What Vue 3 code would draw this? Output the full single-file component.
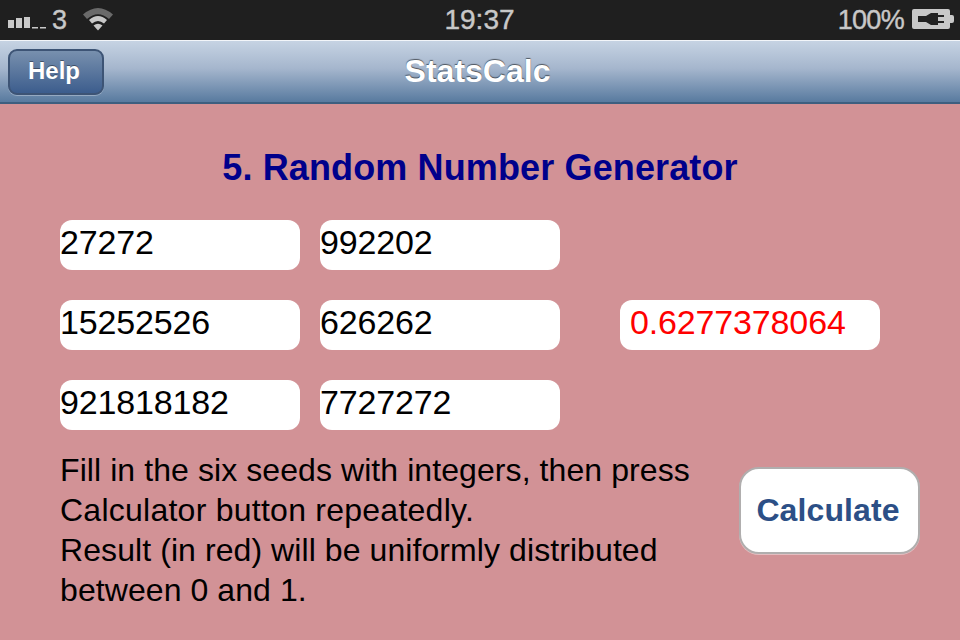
<script setup>
const seeds = [
  ['27272', '992202', ''],
  ['15252526', '626262', '0.6277378064'],
  ['921818182', '7727272', ''],
]
const bars = [
  { x: 8, y: 20, h: 8 },
  { x: 16, y: 18, h: 10 },
  { x: 24, y: 17, h: 11 },
  { x: 32, y: 27, h: 1.5 },
  { x: 40, y: 27, h: 1.5 },
]
</script>

<template>
  <div class="phone">
    <header class="status">
      <div class="status-left">
        <svg class="signal" width="48" height="40" viewBox="0 0 48 40">
          <rect v-for="b in bars" :key="b.x" :x="b.x" :y="b.y" width="6" :height="b.h" fill="#c8c8c8" />
        </svg>
        <span class="carrier">3</span>
        <svg class="wifi" width="32" height="40" viewBox="0 0 32 40">
          <path d="M1 14.5 Q16 1.5 31 14.5 L27 19 Q16 9.5 5 19 Z" fill="#6a6a6a" />
          <path d="M7 20 Q16 12 25 20 L22 23.5 Q16 18.5 10 23.5 Z" fill="#c8c8c8" />
          <path d="M16 30.5 L11.5 25.5 Q16 22 20.5 25.5 Z" fill="#c8c8c8" />
        </svg>
      </div>
      <div class="clock">19:37</div>
      <div class="status-right">
        <span class="pct">100%</span>
        <svg width="44" height="40" viewBox="0 0 44 40">
          <rect x="1" y="9" width="38" height="20" rx="2" fill="#c8c8c8" />
          <path d="M39 15 h2 a2 2 0 0 1 2 2 v4 a2 2 0 0 1 -2 2 h-2 Z" fill="#c8c8c8" />
          <path d="M7 16 h8 l5 -3 h7 v12 h-7 l-5 -3 h-8 Z" fill="#222" />
          <path d="M27 15 h6 v2 h-6 Z M27 21 h6 v2 h-6 Z" fill="#222" />
        </svg>
      </div>
    </header>

    <nav class="navbar">
      <div class="nav-side"><button class="help">Help</button></div>
      <div class="nav-title">StatsCalc</div>
      <div class="nav-side"></div>
    </nav>

    <main class="content">
      <h1 class="title">5. Random Number Generator</h1>

      <div class="grid">
        <template v-for="(row, i) in seeds" :key="i">
          <div class="field">{{ row[0] }}</div>
          <div class="field">{{ row[1] }}</div>
          <div v-if="row[2]" class="field result">{{ row[2] }}</div>
          <div v-else></div>
        </template>
      </div>

      <div class="bottom">
        <p class="help-text">
          Fill in the six seeds with integers, then press<br />
          <span class="wide">Calculator button repeatedly.</span><br />
          Result (in red) will be uniformly distributed<br />
          between 0 and 1.
        </p>
        <button class="calc">Calculate</button>
      </div>
    </main>
  </div>
</template>

<style>
html, body { margin: 0; background: #d29296; }
</style>

<style scoped>
.phone {
  width: 960px;
  height: 640px;
  overflow: hidden;
  display: flex;
  flex-direction: column;
  font-family: "Liberation Sans", Arial, sans-serif;
  background: #d29296;
}
.status {
  height: 40px;
  flex: none;
  background: #1f1f1f;
  color: #c8c8c8;
  display: grid;
  grid-template-columns: 1fr auto 1fr;
  align-items: center;
  font-size: 27px;
  -webkit-text-stroke: 0.4px #c8c8c8;
}
.status-left { display: flex; align-items: center; }
.signal { flex: none; }
.carrier { margin-left: 4px; }
.wifi { margin-left: 15px; flex: none; }
.status-right { display: flex; justify-content: flex-end; align-items: center; }
.status-right svg { margin: 0 5px 0 7px; flex: none; }
.clock { text-align: center; font-size: 28px; margin-left: -1px; }
.pct { letter-spacing: -0.7px; }
.navbar {
  height: 64px;
  flex: none;
  box-sizing: border-box;
  border-top: 1px solid #f2f5f9;
  border-bottom: 2px solid #3d5e7f;
  background: linear-gradient(#c6d3e3, #a5b6cd 45%, #587a9f);
  display: grid;
  grid-template-columns: 1fr auto 1fr;
  align-items: center;
}
.nav-side { display: flex; }
.help {
  width: 96px;
  height: 46px;
  margin: 0 0 0 8px;
  padding: 0 4px 2px 0;
  box-sizing: border-box;
  border: 2px solid #3d5475;
  border-radius: 9px;
  background: linear-gradient(#7890ae, #3c5d8d);
  box-shadow: 0 1px 0 rgba(255, 255, 255, 0.3);
  color: #fff;
  font: bold 24px "Liberation Sans", Arial, sans-serif;
  text-shadow: 0 -1px 0 rgba(0, 0, 0, 0.4);
}
.nav-title {
  margin: -1px 5px 0 0;
  color: #fff;
  font-size: 32px;
  font-weight: bold;
  text-shadow: 0 -1px 1px rgba(0, 0, 0, 0.55);
}
.content {
  flex: 1;
  padding: 0 40px 0 60px;
  color: #000;
}
.title {
  margin: 44px 0 0 -60px;
  width: 960px;
  text-align: center;
  color: #00008b;
  font-size: 36px;
  line-height: 40px;
  font-weight: bold;
  letter-spacing: 0.13px;
}
.grid {
  margin-top: 32px;
  display: grid;
  grid-template-columns: 240px 240px 240px;
  grid-auto-rows: 50px;
  column-gap: 20px;
  row-gap: 30px;
}
.field {
  background: #fff;
  border-radius: 12px;
  font-size: 34px;
  line-height: 44px;
  letter-spacing: -0.15px;
  overflow: hidden;
  white-space: nowrap;
}
.result {
  margin-left: 40px;
  width: 260px;
  padding-left: 10px;
  box-sizing: border-box;
  color: #ff0000;
}
.bottom {
  display: flex;
  justify-content: space-between;
  align-items: flex-start;
  margin-top: 20px;
}
.help-text {
  margin: 0;
  font-size: 32px;
  line-height: 40px;
  letter-spacing: 0.08px;
  white-space: nowrap;
}
.wide { letter-spacing: 0.25px; }
.calc {
  margin-top: 17px;
  width: 181px;
  height: 87px;
  padding: 0 3px 0 0;
  box-sizing: border-box;
  border: 2px solid #b0aeae;
  border-radius: 20px;
  background: #fff;
  box-shadow: 0 1px 0 rgba(255, 255, 255, 0.4);
  color: #2c4f86;
  font: bold 32px "Liberation Sans", Arial, sans-serif;
  letter-spacing: 0.1px;
}
</style>
